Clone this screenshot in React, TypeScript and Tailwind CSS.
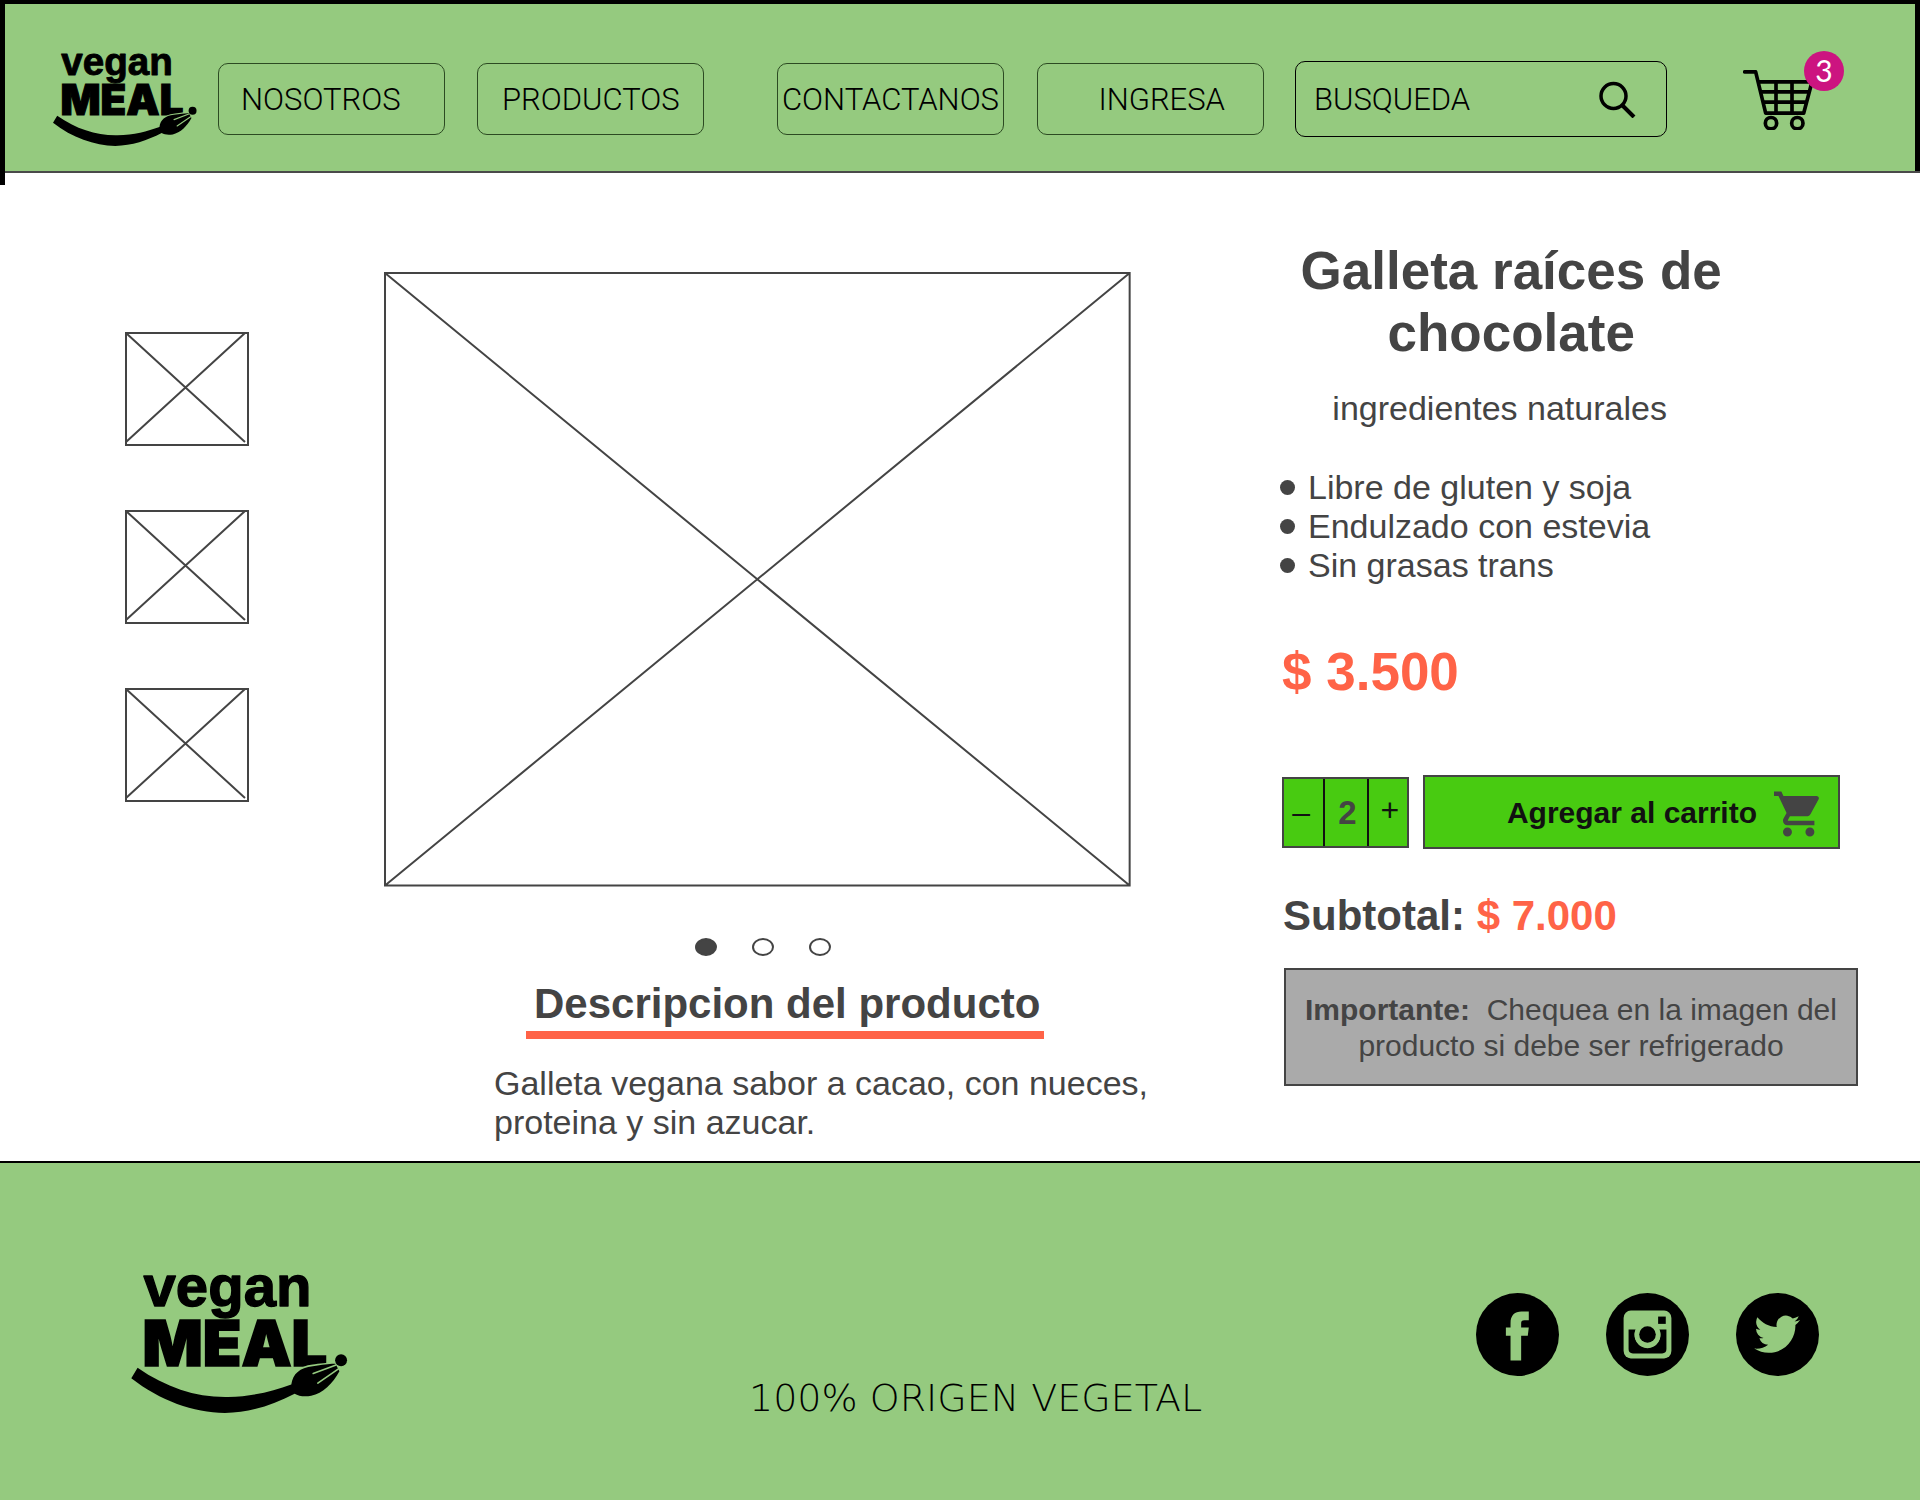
import { useState } from 'react';

const THIN = 'font-["Roboto"] font-light text-black';

function Logo({ className }: { className: string }) {
  return (
    <svg viewBox="93 70 652 479" className={className} role="img" aria-label="vegan MEAL.">
      <text x="130" y="228" fontFamily="Liberation Sans, sans-serif" fontWeight="700" fontSize="175" stroke="#000" strokeWidth="4" strokeLinejoin="round">
        vegan
      </text>
      <text x="127" y="407" fontFamily="Inter, sans-serif" fontWeight="900" fontSize="190" stroke="#000" strokeWidth="5">
        MEAL
      </text>
      <circle cx="725" cy="390" r="18" />
      <path d="M575 463C580 430 600 413 640 408C670 404 695 400 707 401" fill="none" stroke="#95ca7f" strokeWidth="10" />
      <path d="M112 413C200 474 290 503 385 501C460 499 520 483 575 463C580 430 600 413 640 408C670 404 695 400 707 401L712 408L720 423C700 460 670 490 635 497C615 501 597 498 585 491C520 524 450 549 375 549C280 547 180 512 93 444Z" />
      <path d="M641 430L708 405M655 459L716 417" stroke="#95ca7f" strokeWidth="5" strokeLinecap="round" />
    </svg>
  );
}

function Placeholder({ w, h, inset, className }: { w: number; h: number; inset: number; className: string }) {
  const right = w - inset;
  const bottom = h - inset;
  return (
    <svg viewBox={`0 0 ${w} ${h}`} className={className} fill="none" stroke="#444" strokeWidth="2" role="img" aria-label="Imagen del producto">
      <path d={`M1 1H${w - 1}V${h - 1}H1ZM1 1L${right} ${bottom}M${right} 1L1 ${bottom}`} />
    </svg>
  );
}

function SearchIcon() {
  return (
    <svg viewBox="0 0 37 37" className="size-[37px]" fill="none" stroke="#000">
      <circle cx="14.500" cy="15" r="12.500" strokeWidth="3.500" />
      <path d="M23.500 24.500L35 36" strokeWidth="4" />
    </svg>
  );
}

function BasketIcon() {
  return (
    <svg viewBox="0 0 210 182" className="h-[61px] w-[70px]" fill="none" stroke="#000" strokeWidth="11" strokeLinejoin="round">
      <path d="M5 8H38L68 132H182L207 38H46" strokeLinecap="round" />
      <path d="M53 68H198M60 99H190M99 38V132M147 38V132" />
      <circle cx="84" cy="162" r="17" />
      <circle cx="163" cy="162" r="17" />
    </svg>
  );
}

function CartIcon() {
  return (
    <svg viewBox="1 2 20.500 20" className="mt-1 size-[46px]" fill="#444">
      <path d="M7 18c-1.100 0-1.990.9-1.990 2S5.900 22 7 22s2-.9 2-2-.9-2-2-2zM1 2v2h2l3.600 7.590-1.350 2.450c-.16.28-.25.61-.25.96 0 1.100.9 2 2 2h12v-2H7.420c-.14 0-.25-.11-.25-.25l.03-.12.9-1.630h7.450c.75 0 1.410-.41 1.750-1.030l3.580-6.490c.08-.14.12-.31.12-.48 0-.55-.45-1-1-1H5.210l-.94-2H1zm16 16c-1.100 0-1.990.9-1.990 2s.89 2 1.990 2 2-.9 2-2-.9-2-2-2z" />
    </svg>
  );
}

function Facebook() {
  return (
    <svg viewBox="109 67 250 250" className="size-[83px]">
      <circle cx="234" cy="192" r="125" />
      <path fill="#95ca7f" d="M213 270V196H199V171H213V158C213 134 226 123 246 123H268V149H255C247 149 245 152 245 159V171H268L265 196H245V270Z" />
    </svg>
  );
}

function Instagram() {
  return (
    <svg viewBox="498 67 250 250" className="size-[83px]">
      <circle cx="623" cy="192" r="125" />
      <rect x="551" y="120" width="144" height="144" rx="22" fill="#95ca7f" />
      <path d="M566 177H588A39 39 0 1 0 658 177H680V236Q680 249 667 249H579Q566 249 566 236Z" />
      <circle cx="623" cy="192" r="39" fill="#95ca7f" />
      <circle cx="623" cy="192" r="25" />
      <rect x="655" y="138" width="23" height="22" />
    </svg>
  );
}

function Twitter() {
  return (
    <svg viewBox="888 67 250 250" className="size-[83px]">
      <circle cx="1013" cy="192" r="125" />
      <path
        transform="translate(943 122) scale(5.75)"
        fill="#95ca7f"
        d="M23.953 4.570a10 10 0 01-2.825.775 4.958 4.958 0 002.163-2.723c-.951.555-2.005.959-3.127 1.184a4.920 4.920 0 00-8.384 4.482C7.690 8.095 4.067 6.130 1.640 3.162a4.822 4.822 0 00-.666 2.475c0 1.710.870 3.213 2.188 4.096a4.904 4.904 0 01-2.228-.616v.060a4.923 4.923 0 003.946 4.827 4.996 4.996 0 01-2.212.085 4.936 4.936 0 004.604 3.417 9.867 9.867 0 01-6.102 2.105c-.390 0-.779-.023-1.170-.067a13.995 13.995 0 007.557 2.209c9.053 0 13.998-7.496 13.998-13.985 0-.210 0-.420-.015-.630A9.935 9.935 0 0024 4.590z"
      />
    </svg>
  );
}

const navBox = 'flex h-[72px] min-w-0 items-center rounded-[10px] border border-[#2c4a22] pt-0.5';

function Header({ count }: { count: number }) {
  return (
    <header className="relative">
      <div className="grid grid-cols-[213fr_227fr_32fr_227fr_73fr_227fr_33fr_227fr_31fr_372fr_248fr] items-center border-x-[5px] border-t-4 border-black bg-[#95ca7f] pt-12 pb-[25px]">
        <a href="#inicio" className="-mt-3 justify-self-end pr-[21px]">
          <Logo className="h-[106px] w-[144px]" />
        </a>
        <nav className="contents text-[31px]">
          <a href="#nosotros" className={`${navBox} ${THIN} col-start-2 pl-[22px]`}>NOSOTROS</a>
          <a href="#productos" className={`${navBox} ${THIN} col-start-4 pl-6`}>PRODUCTOS</a>
          <a href="#contacto" className={`${navBox} ${THIN} col-start-6 justify-center`}>CONTACTANOS</a>
          <a href="#ingresa" className={`${navBox} ${THIN} col-start-8 justify-end pr-[38px]`}>INGRESA</a>
        </nav>
        <form className="col-start-10 flex h-[76px] min-w-0 items-center rounded-[10px] border border-black pr-[30px] pl-[18px]" onSubmit={(e) => e.preventDefault()}>
          <input
            aria-label="Busqueda"
            placeholder="BUSQUEDA"
            className={`${THIN} min-w-0 flex-1 pt-0.5 text-[31px] outline-none placeholder:text-black`}
          />
          <button type="submit" aria-label="Buscar"><SearchIcon /></button>
        </form>
        <a href="#carrito" aria-label="Carrito" className="relative col-start-11 ml-[76px] w-[70px]">
          <BasketIcon />
          <span className="absolute -top-[18px] left-[61px] flex size-10 items-center justify-center rounded-full bg-[#cc1480] font-['Lato'] text-[30px] text-white">{count}</span>
        </a>
      </div>
      <div className="border-b-2 border-[#4a4a4a]" />
      <div className="absolute top-0 left-0 h-[185px] w-[5px] bg-black" />
    </header>
  );
}

const features = ['Libre de gluten y soja', 'Endulzado con estevia', 'Sin grasas trans'];

export default function App() {
  const [qty, setQty] = useState(2);
  const [slide, setSlide] = useState(0);
  const subtotal = `$ ${(qty * 3.5).toFixed(3)}`;

  return (
    <div className="flex min-h-screen flex-col bg-white font-['Liberation_Sans',sans-serif] text-[#444]">
      <Header count={3} />
      <main className="grid grid-cols-[384fr_896fr_578fr_62fr] pb-[19px]">
        <div className="flex flex-col gap-16 pt-[159px] pl-[125px]">
          {[0, 1, 2].map((i) => (
            <button key={i} type="button" aria-label={`Miniatura ${i + 1}`} onClick={() => setSlide(i)} className="w-[124px]">
              <Placeholder w={124} h={114} inset={4} className="w-full" />
            </button>
          ))}
        </div>

        <section className="pt-[99px]">
          <Placeholder w={746} h={614} inset={1} className="w-5/6" />
          <div className="mt-[51px] ml-[311px] flex gap-[35px]">
            {[0, 1, 2].map((i) => (
              <button
                key={i}
                type="button"
                aria-label={`Imagen ${i + 1}`}
                onClick={() => setSlide(i)}
                className={`h-[18px] w-[22px] rounded-[50%] border-2 border-[#444] ${slide === i ? 'bg-[#444]' : ''}`}
              />
            ))}
          </div>
          <h2 className="mt-6 ml-[142px] w-fit border-b-8 border-[#ff6347] pr-1 pb-[3px] pl-2 text-[42px] leading-[48px] font-bold">
            Descripcion del producto
          </h2>
          <p className="mt-[25px] ml-[110px] max-w-[700px] text-[34px] leading-[39px]">
            Galleta vegana sabor a cacao, con nueces, proteina y sin azucar.
          </p>
        </section>

        <section className="pt-[67px]">
          <h1 className="w-4/5 text-center text-[53px] leading-[62px] font-bold">Galleta raíces de chocolate</h1>
          <p className="mt-6 w-[76%] text-center text-[34px] leading-10">ingredientes naturales</p>
          <ul className="mt-10 text-[34px] leading-[39px]">
            {features.map((f) => (
              <li key={f} className="flex items-center gap-[13px]">
                <span className="size-[15px] rounded-full bg-[#444]" />
                {f}
              </li>
            ))}
          </ul>
          <p className="mt-14 pl-0.5 text-[53px] leading-[62px] font-bold text-[#ff6347]">$ 3.500</p>
          <div className="mt-[72px] flex items-center gap-[14px] pr-[18px] pl-0.5">
            <div className="flex h-[71px] w-[127px] border-2 border-[#444] bg-[#48cb11]">
              <button type="button" aria-label="Quitar uno" onClick={() => setQty(Math.max(1, qty - 1))} className="flex-1 pr-1 text-[32px] text-[#111]">–</button>
              <output className="flex w-[46px] items-center justify-center border-x-2 border-[#111] pt-0.5 pl-1 text-[33px] font-bold">{qty}</output>
              <button type="button" aria-label="Agregar uno" onClick={() => setQty(qty + 1)} className="flex-1 pb-1 pl-1 text-[32px] text-[#111]">+</button>
            </div>
            <button type="button" className="flex h-[74px] flex-1 items-center justify-end gap-[17px] border-2 border-[#444] bg-[#48cb11] pr-[18px] text-[30px] font-bold text-[#111]">
              Agregar al carrito
              <CartIcon />
            </button>
          </div>
          <p className="mt-[43px] pl-[3px] text-[42px] leading-[48px] font-bold">
            Subtotal: <span className="text-[#ff6347]">{subtotal}</span>
          </p>
          <div className="mt-7 ml-1 border-2 border-[#444] bg-[#aaa] px-3 pt-[22px] pb-5 text-center text-[30px] leading-9">
            <strong>Importante:</strong>&nbsp; Chequea en la imagen del producto si debe ser refrigerado
          </div>
        </section>
      </main>

      <footer className="grid flex-1 grid-cols-[749fr_727fr_444fr] border-t-2 border-black bg-[#95ca7f] pt-[91px]">
        <Logo className="ml-[131px] h-[159px] w-[217px]" />
        <p className="mt-[120px] font-['DejaVu_Sans'] text-[38px] leading-[48px] font-extralight text-black">100% ORIGEN VEGETAL</p>
        <div className="mt-[39px] flex gap-[47px]">
          <a href="#facebook" aria-label="Facebook" className="self-start"><Facebook /></a>
          <a href="#instagram" aria-label="Instagram" className="self-start"><Instagram /></a>
          <a href="#twitter" aria-label="Twitter" className="self-start"><Twitter /></a>
        </div>
      </footer>
    </div>
  );
}
